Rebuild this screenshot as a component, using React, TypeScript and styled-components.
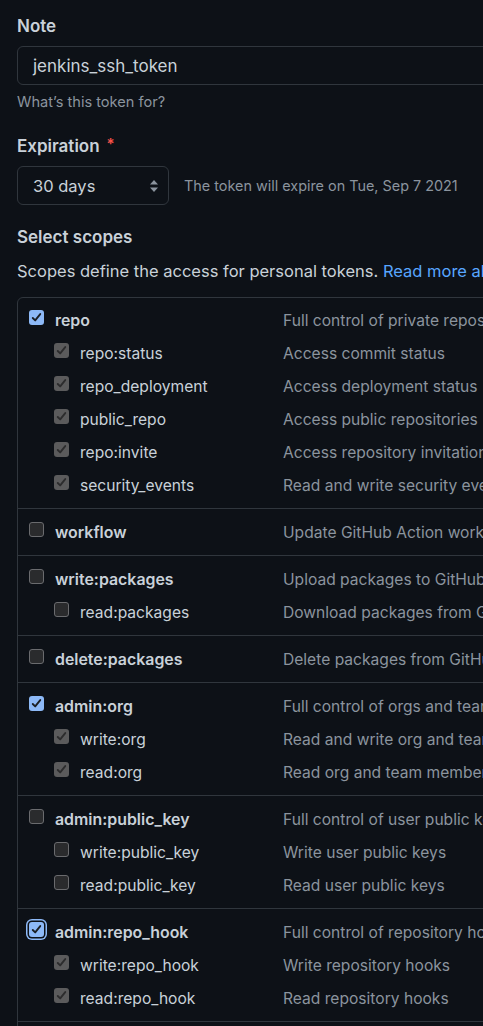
import React from 'react';
import styled, { createGlobalStyle, css } from 'styled-components';

const GlobalStyle = createGlobalStyle`
  html, body {
    margin: 0;
    padding: 0;
    background: #0d1117;
    overflow: hidden;
  }
  body {
    font-family: Inter, "Liberation Sans", Arial, sans-serif;
    color: #c9d1d9;
    -webkit-font-smoothing: antialiased;
  }
`;

const Page = styled.div`
  width: 760px;
  box-sizing: border-box;
  padding: 14px 0 40px 17px;
  display: flex;
  flex-direction: column;
`;

const Label = styled.div<{ $mt?: number }>`
  font-size: 17px;
  font-weight: 600;
  line-height: 24px;
  color: #c9d1d9;
  margin-top: ${(p) => p.$mt ?? 0}px;
  white-space: nowrap;
`;

const Required = styled.span`
  color: #f85149;
  font-size: 15px;
  margin-left: 7px;
  position: relative;
  top: -3px;
`;

const TextInput = styled.div`
  margin-top: 8px;
  width: 640px;
  height: 39px;
  box-sizing: border-box;
  border: 1px solid #30363d;
  border-radius: 6px;
  padding: 0 15px;
  display: flex;
  align-items: center;
  font-size: 17px;
  color: #c9d1d9;
  white-space: nowrap;
`;

const Hint = styled.div<{ $mt?: number }>`
  margin-top: ${(p) => p.$mt ?? 0}px;
  font-size: 14.6px;
  line-height: 20px;
  color: #8b949e;
  white-space: nowrap;
`;

const SelectRow = styled.div`
  margin-top: 7px;
  display: flex;
  align-items: center;
  gap: 15px;
`;

const Select = styled.div`
  width: 152px;
  height: 39px;
  box-sizing: border-box;
  border: 1px solid #30363d;
  border-radius: 6px;
  padding: 0 9px 0 15px;
  display: flex;
  align-items: center;
  justify-content: space-between;
  font-size: 16.5px;
  color: #c9d1d9;
`;

const SideNote = styled.span`
  font-size: 14.4px;
  color: #8b949e;
  white-space: nowrap;
`;

const Paragraph = styled.div`
  margin-top: 10px;
  font-size: 16.5px;
  line-height: 24px;
  color: #c9d1d9;
  white-space: nowrap;
`;

const Link = styled.a`
  color: #58a6ff;
  text-decoration: none;
`;

const Table = styled.div`
  margin-top: 14px;
  width: 700px;
  border: 1px solid #30363d;
  border-radius: 6px;
  display: flex;
  flex-direction: column;
`;

const Group = styled.div`
  padding: 6px 0;
  & + & {
    border-top: 1px solid #30363d;
    padding-top: 7px;
  }
`;

const Row = styled.div`
  display: flex;
  height: 33px;
  padding-left: 11px;
`;

const NameCell = styled.div<{ $sub?: boolean }>`
  width: 254px;
  flex-shrink: 0;
  box-sizing: border-box;
  padding-left: ${(p) => (p.$sub ? 25 : 0)}px;
  display: flex;
  align-items: flex-start;
  gap: 11px;
`;

const Name = styled.span<{ $sub?: boolean }>`
  font-size: ${(p) => (p.$sub ? 15.6 : 15.9)}px;
  line-height: 33px;
  font-weight: ${(p) => (p.$sub ? 400 : 600)};
  color: #c9d1d9;
  white-space: nowrap;
`;

const Desc = styled.span`
  font-size: 15.6px;
  line-height: 33px;
  color: #8b949e;
  white-space: nowrap;
`;

type BoxState = 'checked' | 'disabled' | 'unchecked' | 'focused';

const Box = styled.span<{ $state: BoxState }>`
  margin-top: 6px;
  width: 15px;
  height: 15px;
  flex-shrink: 0;
  box-sizing: border-box;
  border-radius: 3px;
  display: flex;
  align-items: center;
  justify-content: center;
  ${(p) =>
    p.$state === 'unchecked'
      ? css`
          background: #2a2b2d;
          border: 1px solid #6a6b6e;
        `
      : p.$state === 'disabled'
      ? css`
          background: #5b5b5c;
        `
      : css`
          background: #8db9f7;
        `}
  ${(p) =>
    p.$state === 'focused' &&
    css`
      box-shadow: 0 0 0 1.5px #0d1117, 0 0 0 3px #8db9f7;
    `}
`;

const Check = ({ color }: { color: string }) => (
  <svg width="13" height="13" viewBox="0 0 16 16">
    <path
      d="M3.4 8.6 L6.4 11.6 L12.6 3.8"
      fill="none"
      stroke={color}
      strokeWidth="2.3"
      strokeLinecap="round"
      strokeLinejoin="round"
    />
  </svg>
);

const Checkbox = ({ state }: { state: BoxState }) => (
  <Box $state={state}>
    {state === 'checked' || state === 'focused' ? <Check color="#1b1f24" /> : null}
    {state === 'disabled' ? <Check color="#2c2c2d" /> : null}
  </Box>
);

const Arrows = () => (
  <svg width="10" height="14" viewBox="0 0 10 14">
    <path d="M5 1 L9 5.5 H1 Z" fill="#8b949e" />
    <path d="M5 13 L9 8.5 H1 Z" fill="#8b949e" />
  </svg>
);

type Sub = { name: string; desc: string; state: BoxState };
type Scope = Sub & { subs?: Sub[] };

const scopes: Scope[] = [
  {
    name: 'repo',
    desc: 'Full control of private repositories',
    state: 'checked',
    subs: [
      { name: 'repo:status', desc: 'Access commit status', state: 'disabled' },
      { name: 'repo_deployment', desc: 'Access deployment status', state: 'disabled' },
      { name: 'public_repo', desc: 'Access public repositories', state: 'disabled' },
      { name: 'repo:invite', desc: 'Access repository invitations', state: 'disabled' },
      { name: 'security_events', desc: 'Read and write security events', state: 'disabled' },
    ],
  },
  { name: 'workflow', desc: 'Update GitHub Action workflows', state: 'unchecked' },
  {
    name: 'write:packages',
    desc: 'Upload packages to GitHub Package Registry',
    state: 'unchecked',
    subs: [{ name: 'read:packages', desc: 'Download packages from GitHub Package Registry', state: 'unchecked' }],
  },
  { name: 'delete:packages', desc: 'Delete packages from GitHub Package Registry', state: 'unchecked' },
  {
    name: 'admin:org',
    desc: 'Full control of orgs and teams, read and write org projects',
    state: 'checked',
    subs: [
      { name: 'write:org', desc: 'Read and write org and team membership', state: 'disabled' },
      { name: 'read:org', desc: 'Read org and team membership', state: 'disabled' },
    ],
  },
  {
    name: 'admin:public_key',
    desc: 'Full control of user public keys',
    state: 'unchecked',
    subs: [
      { name: 'write:public_key', desc: 'Write user public keys', state: 'unchecked' },
      { name: 'read:public_key', desc: 'Read user public keys', state: 'unchecked' },
    ],
  },
  {
    name: 'admin:repo_hook',
    desc: 'Full control of repository hooks',
    state: 'focused',
    subs: [
      { name: 'write:repo_hook', desc: 'Write repository hooks', state: 'disabled' },
      { name: 'read:repo_hook', desc: 'Read repository hooks', state: 'disabled' },
    ],
  },
  { name: 'admin:org_hook', desc: 'Full control of organization hooks', state: 'unchecked' },
];

export default function App() {
  return (
    <>
      <GlobalStyle />
      <Page>
        <Label>Note</Label>
        <TextInput>jenkins_ssh_token</TextInput>
        <Hint $mt={7}>What’s this token for?</Hint>
        <Label $mt={22}>
          Expiration<Required>*</Required>
        </Label>
        <SelectRow>
          <Select>
            <span>30 days</span>
            <Arrows />
          </Select>
          <SideNote>The token will expire on Tue, Sep 7 2021</SideNote>
        </SelectRow>
        <Label $mt={20}>Select scopes</Label>
        <Paragraph>
          Scopes define the access for personal tokens. <Link href="#">Read more about OAuth scopes.</Link>
        </Paragraph>
        <Table>
          {scopes.map((s) => (
            <Group key={s.name}>
              <Row>
                <NameCell>
                  <Checkbox state={s.state} />
                  <Name>{s.name}</Name>
                </NameCell>
                <Desc>{s.desc}</Desc>
              </Row>
              {s.subs?.map((c) => (
                <Row key={c.name}>
                  <NameCell $sub>
                    <Checkbox state={c.state} />
                    <Name $sub>{c.name}</Name>
                  </NameCell>
                  <Desc>{c.desc}</Desc>
                </Row>
              ))}
            </Group>
          ))}
        </Table>
      </Page>
    </>
  );
}
